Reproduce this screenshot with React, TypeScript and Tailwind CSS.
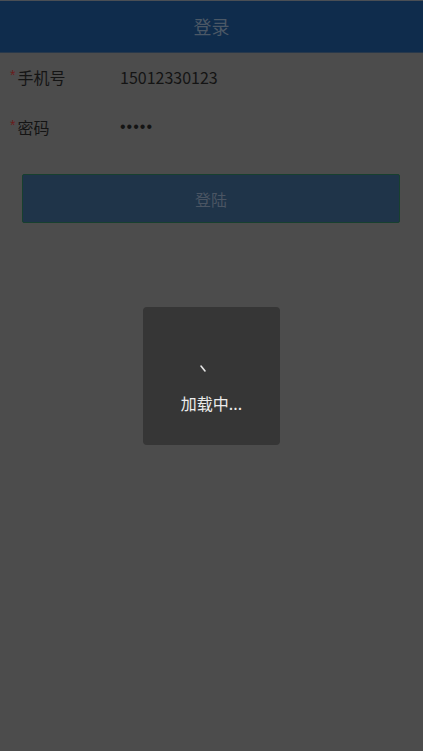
const font = { fontFamily: '"Noto Sans CJK SC", "Noto Sans", sans-serif' };

const Field = ({ label, value, mono }: { label: string; value: string; mono?: boolean }) => (
  <div className="flex items-center h-[50px] pb-[2px] pl-[10px]">
    <div className="w-[110px] flex items-center text-[16px] text-[#141414]">
      <span
        className="text-[#6a1c1c] text-[14px] leading-none self-start mt-[3px] mr-[2px]"
        style={{ fontFamily: '"Liberation Sans", sans-serif' }}
      >
        *
      </span>
      <span>{label}</span>
    </div>
    <span
      className={mono ? 'text-[16px] text-[#141414] tracking-[1px]' : 'text-[16px] text-[#141414]'}
      style={mono ? { fontFamily: '"Liberation Sans", sans-serif' } : undefined}
    >
      {value}
    </span>
  </div>
);

export default function App() {
  return (
    <div className="relative w-[423px] h-[751px] bg-[#4c4c4c] overflow-hidden" style={font}>
      <div className="border-t border-[#4a4f55] h-[53px] bg-[#0f2c4c] border-b border-b-[#27384b] flex items-center justify-center">
        <span className="text-[18px] text-[#4b5866]">登录</span>
      </div>
      <div>
        <Field label="手机号" value="15012330123" />
        <Field label="密码" value="•••••" mono />
      </div>
      <div className="px-[22px] mt-[21px] pr-[23px]">
        <button className="w-full h-[49px] bg-[#1f3449] border border-[#17402f] rounded-[2px] text-[16px] text-[#4a5563]">
          登陆
        </button>
      </div>

      <div className="absolute left-[143px] top-[307px] w-[137px] h-[138px] bg-[#363636] rounded-[4px] flex flex-col items-center">
        <svg className="mt-[57px] ml-[-17px]" width="10" height="10" viewBox="0 0 10 10">
          <line x1="3" y1="2" x2="7" y2="7" stroke="#e8e8e8" strokeWidth="1.6" strokeLinecap="round" />
        </svg>
        <span className="mt-[21px] text-[16px] text-[#ececec] leading-none">加载中...</span>
      </div>
    </div>
  );
}
